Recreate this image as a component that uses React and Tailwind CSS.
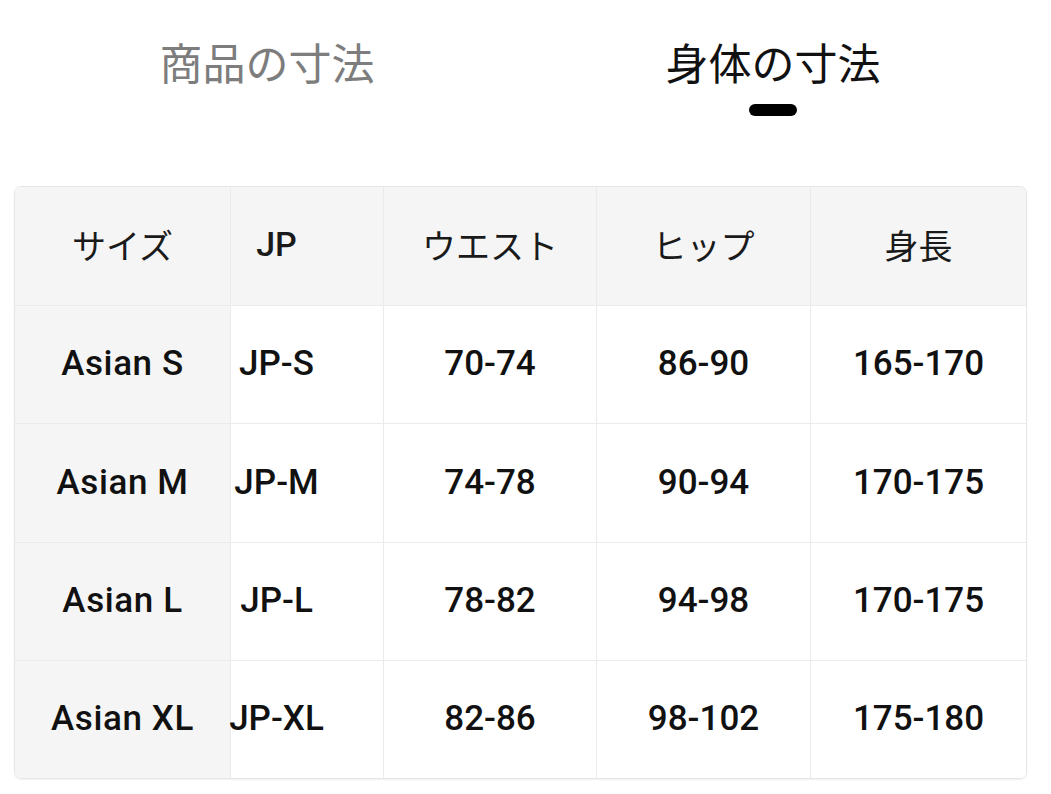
const COLS = ['w-[216px]', 'w-[153px]', 'w-[213px]', 'w-[214px]', 'w-[215px]']
const HEIGHTS = ['h-[118px]', 'h-[117px]', 'h-[118px]', 'h-[117px]', 'h-[117px]']

const HEAD = ['サイズ', 'JP', 'ウエスト', 'ヒップ', '身長']

const ROWS = [
  ['Asian S', 'JP-S', '70-74', '86-90', '165-170'],
  ['Asian M', 'JP-M', '74-78', '90-94', '170-175'],
  ['Asian L', 'JP-L', '78-82', '94-98', '170-175'],
  ['Asian XL', 'JP-XL', '82-86', '98-102', '175-180'],
]

const jp = "font-['Noto_Sans_CJK_JP',sans-serif]"
const num = "font-['Roboto','Noto_Sans_CJK_JP',sans-serif]"

function Cell({ col, head, children, last, row }) {
  const bg = head || col === 0 ? 'bg-[#f5f5f5]' : 'bg-white'
  const edge = last ? '' : 'border-r border-[#ebebeb]'
  const pad = col === 1 ? 'pr-[61px]' : ''
  return (
    <div className={`${COLS[col]} ${HEIGHTS[row]} ${bg} ${edge} ${pad} shrink-0 flex items-center justify-center whitespace-nowrap`}>
      {children}
    </div>
  )
}

export default function App() {
  return (
    <div className="w-[1051px] h-[794px] bg-white overflow-hidden">
      <div className="flex pt-[35px]">
        <div className="w-[534px] flex flex-col items-center">
          <span className={`${jp} text-[43px] leading-[52px] text-[#7d7d7d]`}>商品の寸法</span>
        </div>
        <div className="w-[478px] flex flex-col items-center">
          <span className={`${jp} text-[43px] leading-[52px] text-[#111]`}>身体の寸法</span>
          <div className="mt-[17px] w-[48px] h-[12px] rounded-full bg-black" />
        </div>
      </div>

      <div className="mt-[70px] ml-[14px] w-[1013px] border border-[#e6e6e6] rounded-[7px] overflow-hidden shadow-[0_1px_2px_rgba(0,0,0,0.06)]">
        <div className="flex border-b border-[#ebebeb]">
          {HEAD.map((t, i) => (
            <Cell key={t} col={i} head last={i === 4} row={0}>
              <span className={`${i === 1 ? num : jp} text-[34px] text-[#1a1a1a] -mt-[4px] ${i === 1 ? 'font-medium' : ''}`}>{t}</span>
            </Cell>
          ))}
        </div>
        {ROWS.map((r, ri) => (
          <div key={r[0]} className={`flex ${ri < ROWS.length - 1 ? 'border-b border-[#ebebeb]' : ''}`}>
            {r.map((t, i) => (
              <Cell key={i} col={i} last={i === 4} row={ri + 1}>
                <span className={`${num} text-[35px] font-medium text-[#111] ${i === 0 ? 'tracking-[0.6px]' : ''}`}>{t}</span>
              </Cell>
            ))}
          </div>
        ))}
      </div>
    </div>
  )
}
